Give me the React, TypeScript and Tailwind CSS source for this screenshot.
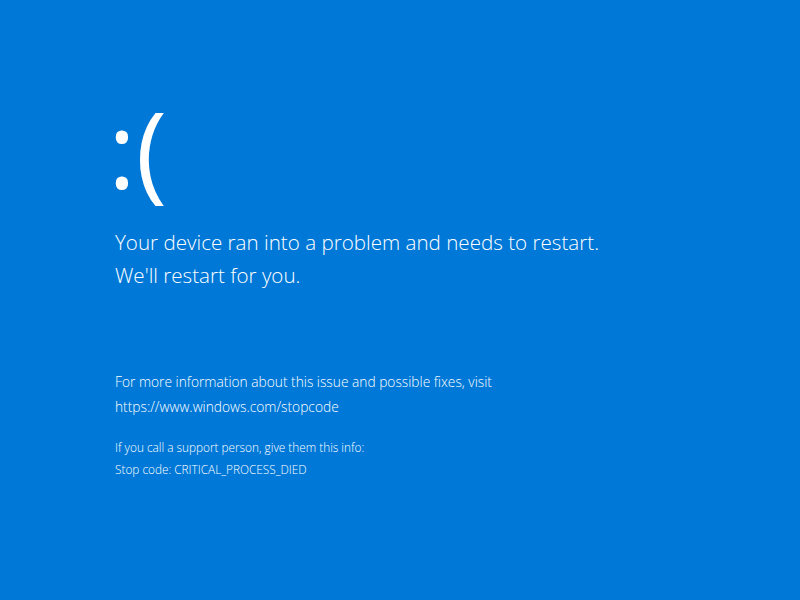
import React from "react";

export default function App() {
  return (
    <div
      className="w-[800px] h-[600px] bg-[#0078d7] text-white overflow-hidden"
      style={{ fontFamily: '"Open Sans", "Noto Sans", sans-serif' }}
    >
      <div className="pl-[115px] pt-[92px] flex flex-col">
        <div className="text-[106px] leading-[130px] font-normal h-[130px] -ml-[7px] -mt-[9px]">:(</div>
        <div className="mt-[13px] text-[20.6px] font-light leading-[33px]">
          <div>Your device ran into a problem and needs to restart.</div>
          <div>We'll restart for you.</div>
        </div>
        <div className="mt-[77px] text-[13.75px] font-light leading-[25px]">
          <div>For more information about this issue and possible fixes, visit</div>
          <div>https://www.windows.com/stopcode</div>
        </div>
        <div className="mt-[17px] text-[11.8px] font-light leading-[22px]">
          <div>If you call a support person, give them this info:</div>
          <div>Stop code: CRITICAL_PROCESS_DIED</div>
        </div>
      </div>
    </div>
  );
}
